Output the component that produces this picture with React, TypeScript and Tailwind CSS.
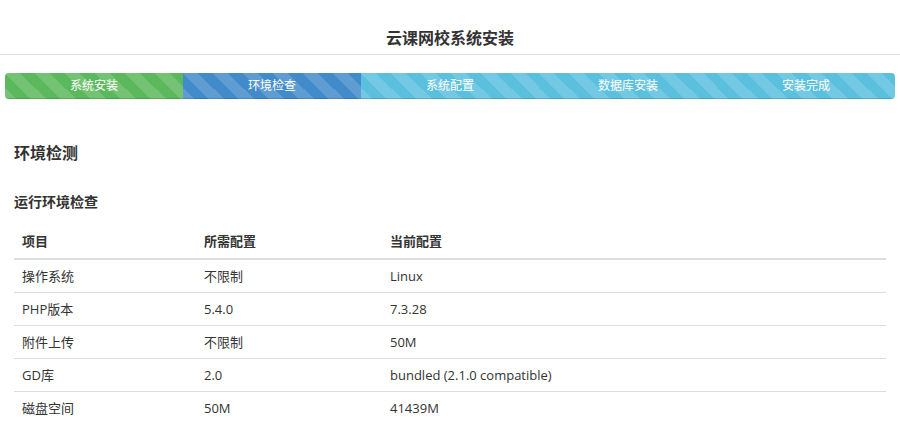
import React from 'react';

interface Step {
  label: string;
  color: string;
}

const steps: Step[] = [
  { label: '系统安装', color: 'bg-[#5cb85c]' },
  { label: '环境检查', color: 'bg-[#428bca]' },
  { label: '系统配置', color: 'bg-[#5bc0de]' },
  { label: '数据库安装', color: 'bg-[#5bc0de]' },
  { label: '安装完成', color: 'bg-[#5bc0de]' },
];

const rows = [
  ['操作系统', '不限制', 'Linux'],
  ['PHP版本', '5.4.0', '7.3.28'],
  ['附件上传', '不限制', '50M'],
  ['GD库', '2.0', 'bundled (2.1.0 compatible)'],
  ['磁盘空间', '50M', '41439M'],
];

const App: React.FC = () => {
  return (
    <div className="min-h-[436px] w-full bg-white text-[#333] font-['Open_Sans','Noto_Sans_CJK_SC',sans-serif]">
      {/* Header */}
      <div className="border-b border-[#dddddd] pt-[27px] pb-[5px] text-center">
        <h1 className="text-[16px] leading-[22px] font-bold text-[#333]">云课网校系统安装</h1>
      </div>

      {/* Steps */}
      <div className="mx-[5px] mt-[18px] flex h-[26px] overflow-hidden rounded-[4px] bg-[#f5f5f5] shadow-[inset_0_1px_2px_rgba(0,0,0,0.1)]">
        {steps.map((step) => (
          <div
            key={step.label}
            className={`flex w-1/5 items-center justify-center text-[12px] text-white shadow-[inset_0_-1px_0_rgba(0,0,0,0.15)] bg-[linear-gradient(45deg,rgba(255,255,255,0.15)_25%,transparent_25%,transparent_50%,rgba(255,255,255,0.15)_50%,rgba(255,255,255,0.15)_75%,transparent_75%,transparent)] bg-[length:30px_30px] ${step.color}`}
          >
            {step.label}
          </div>
        ))}
      </div>

      {/* Content */}
      <div className="px-[14px]">
        <h2 className="mt-[43px] text-[16px] leading-[22px] font-bold">环境检测</h2>
        <h3 className="mt-[28px] text-[14px] leading-[20px] font-bold">运行环境检查</h3>

        <table className="mt-[13px] w-full border-collapse text-[13px]">
          <thead>
            <tr>
              <th className="w-[182px] border-b-2 border-[#dddddd] px-[8px] py-[8px] text-left leading-[17px] font-bold">
                项目
              </th>
              <th className="w-[186px] border-b-2 border-[#dddddd] px-[8px] py-[8px] text-left leading-[17px] font-bold">
                所需配置
              </th>
              <th className="border-b-2 border-[#dddddd] px-[8px] py-[8px] text-left leading-[17px] font-bold">
                当前配置
              </th>
            </tr>
          </thead>
          <tbody>
            {rows.map((row, i) => (
              <tr key={row[0]}>
                {row.map((cell, j) => (
                  <td
                    key={j}
                    className={`px-[8px] py-[8px] leading-[16px] ${i > 0 ? 'border-t border-[#dddddd]' : ''}`}
                  >
                    {cell}
                  </td>
                ))}
              </tr>
            ))}
          </tbody>
        </table>
      </div>
    </div>
  );
};

export default App;
